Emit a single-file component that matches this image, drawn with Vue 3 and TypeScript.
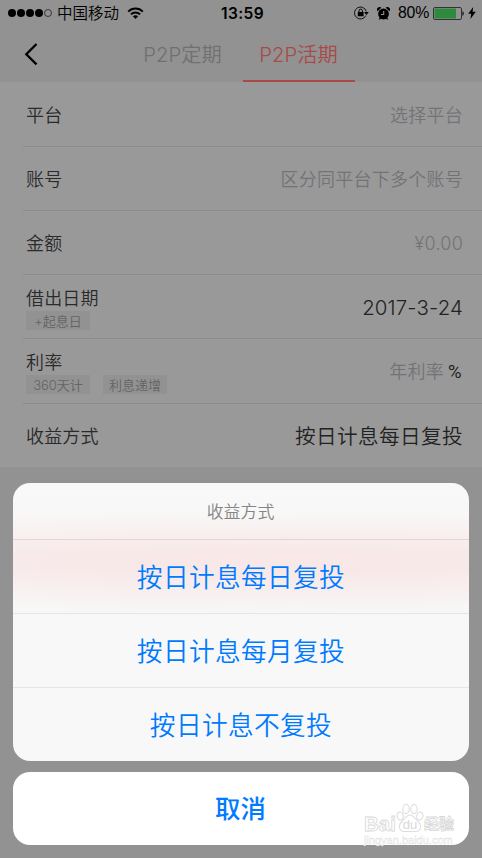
<script setup lang="ts">
interface Row {
  label: string
  value: string
  kind: 'hint' | 'value' | 'method' | 'rate'
  tags?: string[]
}

const rows: Row[] = [
  { label: '平台', value: '选择平台', kind: 'hint' },
  { label: '账号', value: '区分同平台下多个账号', kind: 'hint' },
  { label: '金额', value: '¥0.00', kind: 'hint' },
  { label: '借出日期', value: '2017-3-24', kind: 'value', tags: ['+起息日'] },
  { label: '利率', value: '年利率', kind: 'rate', tags: ['360天计', '利息递增'] },
  { label: '收益方式', value: '按日计息每日复投', kind: 'method' },
]

const options: string[] = ['按日计息每日复投', '按日计息每月复投', '按日计息不复投']
</script>

<template>
  <div class="screen">
    <div class="status">
      <div class="carrier">
        <svg class="dots" width="45" height="10" viewBox="0 0 45 10">
          <circle v-for="i in 4" :key="i" :cx="4 + (i - 1) * 9" cy="5" r="4" />
          <circle cx="40" cy="5" r="3.5" fill="none" stroke="#222" stroke-width="0.8" />
        </svg>
        <span class="carrier-name">中国移动</span>
        <svg class="wifi" width="17" height="13" viewBox="0 0 17 13" fill="none" stroke="#000" stroke-width="2">
          <path d="M1.2 4.6C5.2 .5 11.8 .5 15.8 4.6M3.9 7.4c2.6-2.5 6.6-2.5 9.2 0" />
          <path d="M5.8 9.3c1.6-1.4 3.8-1.4 5.4 0L8.5 12Z" fill="#000" stroke="none" />
        </svg>
      </div>
      <div class="clock">13:59</div>
      <div class="indicators">
        <svg width="15" height="14" viewBox="0 0 15 14">
          <path d="M11.9 9.6A6 6 0 1 1 12.3 5.5" fill="none" stroke="#111" stroke-width="1" />
          <path d="M10 6h4.8l-2.4 3Z" />
          <rect x="3.8" y="6" width="5.8" height="4.2" rx=".5" />
          <path d="M5 6V4.8a1.7 1.7 0 0 1 3.4 0V6" fill="none" stroke="#000" stroke-width="1" />
        </svg>
        <svg class="alarm" width="13" height="13" viewBox="0 0 13 13">
          <circle cx="6.5" cy="7" r="5.4" />
          <path d="M.5 4.2A2.6 2.6 0 0 1 4.3 .7ZM12.5 4.2A2.6 2.6 0 0 0 8.7 .7ZM1.7 12.6l1.5-2.6 1.3.9-1.5 1.7ZM11.3 12.6l-1.5-2.6-1.3.9 1.5 1.7Z" />
          <path d="M6.7 4v3.5H4" fill="none" stroke="#929292" stroke-width="1.1" />
        </svg>
        <span class="percent">80%</span>
        <svg class="battery" width="32" height="13" viewBox="0 0 32 13">
          <rect x=".5" y=".5" width="28" height="12" rx="1.5" fill="none" stroke="#333" stroke-width="1" />
          <rect x="1.5" y="1.5" width="21.5" height="10" fill="#2e8b3d" />
          <path d="M29.5 4.3c1.6.3 1.6 4.1 0 4.4Z" />
        </svg>
        <svg class="bolt" width="8" height="12" viewBox="0 0 8 12"><path d="M5.2 0 .2 6.7h3L2.4 12l5.4-7.3H4.6Z" /></svg>
      </div>
    </div>

    <div class="nav">
      <svg class="back" width="14" height="24" viewBox="0 0 14 24" fill="none" stroke="#000" stroke-width="2.3">
        <path d="M12.5 2 2.3 12.2 12.5 22.4" />
      </svg>
      <div class="tab">P2P定期</div>
      <div class="tab active">P2P活期</div>
    </div>

    <div class="form">
      <div v-for="row in rows" :key="row.label" class="row">
        <div class="left">
          <div class="label">{{ row.label }}</div>
          <div v-if="row.tags" class="tags">
            <span v-for="tag in row.tags" :key="tag" class="tag">{{ tag }}</span>
          </div>
        </div>
        <div class="field" :class="row.kind">
          <span>{{ row.value }}</span>
          <span v-if="row.kind === 'rate'" class="unit">%</span>
        </div>
      </div>
    </div>

    <div class="actions">
      <div class="sheet">
        <div class="title">收益方式</div>
        <div v-for="option in options" :key="option" class="option">{{ option }}</div>
      </div>
      <div class="cancel">取消</div>
    </div>

    <div class="watermark">
      <div class="brand">
        <span>Bai</span>
        <svg width="28" height="31" viewBox="0 0 28 31" fill="#fff" stroke="#dedede" stroke-width="1.1">
          <ellipse cx="4.2" cy="13" rx="3" ry="4" transform="rotate(-15 4.2 13)" />
          <ellipse cx="10" cy="6" rx="3.2" ry="4.6" />
          <ellipse cx="18" cy="6" rx="3.2" ry="4.6" />
          <ellipse cx="23.8" cy="13" rx="3" ry="4" transform="rotate(15 23.8 13)" />
          <path d="M14 12c-3.5 0-5 3.5-8 6.5-5 4.5-2 10 2 10h12c4 0 7-5.5 2-10-3-3-4.5-6.5-8-6.5Z" />
          <text x="14" y="26" text-anchor="middle" class="du">du</text>
        </svg>
        <span class="cn">经验</span>
      </div>
      <div class="site">jingyan.baidu.com</div>
    </div>
  </div>
</template>

<style>
body {
  margin: 0;
  background: #929292;
}
</style>

<style scoped>
.screen {
  position: relative;
  width: 482px;
  height: 858px;
  overflow: hidden;
  background: #929292;
  font-family: Inter, "Noto Sans CJK SC", sans-serif;
  color: #000;
}
.status {
  display: grid;
  grid-template-columns: 1fr auto 1fr;
  align-items: center;
  height: 26px;
  padding: 0 6px 0 8px;
}
.carrier,
.indicators {
  display: flex;
  align-items: center;
}
.carrier-name {
  margin-left: 4px;
  padding-top: 2px;
  font-size: 15.5px;
  line-height: 24px;
  font-weight: 350;
}
.wifi {
  margin-left: 8px;
}
.clock {
  padding-left: 1px;
  font-size: 15.5px;
  font-weight: 600;
  letter-spacing: 0.4px;
}
.indicators {
  justify-content: flex-end;
}
.alarm {
  margin-left: 8px;
}
.percent {
  margin-left: 8px;
  font-family: "Liberation Sans", sans-serif;
  font-size: 15.8px;
  letter-spacing: -0.2px;
}
.battery {
  margin-left: 4px;
}
.bolt {
  margin-left: 3px;
}
.nav {
  display: flex;
  height: 56px;
  padding-left: 24px;
}
.back {
  margin: 16px 89px 0 0;
}
.tab {
  box-sizing: border-box;
  width: 112px;
  margin-right: 4px;
  padding: 14px 1px 0 0;
  border-radius: 3px 3px 0 0;
  text-align: center;
  font-size: 20.3px;
  font-weight: 350;
  line-height: 30px;
  color: #707070;
}
.tab.active {
  color: #a84a4a;
  background: linear-gradient(#a84a4a, #a84a4a) bottom / 100% 2.5px no-repeat;
}
.form {
  padding-top: 0.6px;
  background: #999;
}
.row {
  box-sizing: border-box;
  display: flex;
  justify-content: space-between;
  align-items: center;
  height: 64.2px;
  margin-left: 23px;
  padding: 3px 19px 0 3px;
  border-bottom: 1px solid #8b8b8b;
}
.row:last-child {
  height: 63.4px;
  border-bottom: 0;
}
.label {
  font-size: 18px;
  line-height: 26px;
  font-weight: 350;
  letter-spacing: 0.15px;
  color: #2a2a2a;
}
.tags {
  display: flex;
  gap: 13px;
  margin-top: -1px;
  padding-bottom: 1px;
}
.tag {
  width: 64px;
  height: 19px;
  background: #929292;
  text-align: center;
  font-size: 13px;
  line-height: 20px;
  font-weight: 350;
  color: #646464;
}
.field {
  font-size: 18px;
  font-weight: 350;
  line-height: 28px;
  letter-spacing: 0.25px;
  color: #737377;
}
.field.value,
.field.method {
  font-size: 20.6px;
  color: #222;
}
.field.value {
  font-size: 20.4px;
  letter-spacing: 0.15px;
}
.field.method {
  letter-spacing: 0.4px;
}
.field.rate {
  margin-right: 1.5px;
}
.unit {
  margin-left: 4px;
  font-family: Roboto, sans-serif;
  font-size: 18.5px;
  font-weight: 400;
  letter-spacing: 0;
  color: #222;
}
.actions {
  position: absolute;
  left: 13px;
  right: 13px;
  bottom: 13px;
  display: flex;
  flex-direction: column;
  gap: 11px;
  text-align: center;
  color: #007aff;
}
.sheet {
  border-radius: 17px;
  background:
    radial-gradient(ellipse 200px 55px at 35% 29%, rgba(247, 225, 225, 0.35), transparent),
    radial-gradient(ellipse 200px 55px at 78% 29%, rgba(247, 225, 225, 0.35), transparent),
    linear-gradient(#f9f9f9 0, #f9f8f8 9%, #f8f2f2 18%, #f8ebeb 25%, #f8ebeb 31%, #f8f2f2 39%, #f8f7f7 46%, #f8f8f8 51%);
}
.title {
  box-sizing: border-box;
  height: 56px;
  padding: 1px 1px 0 0;
  font-size: 16.9px;
  line-height: 57px;
  font-weight: 350;
  color: #858585;
}
.option {
  box-sizing: border-box;
  height: 74px;
  border-top: 1px solid #e6e4e5;
  font-size: 25.7px;
  line-height: 75px;
  letter-spacing: 0.35px;
  font-weight: 350;
}
.title + .option {
  border-top-color: #ecd2d4;
}
.cancel {
  box-sizing: border-box;
  height: 73px;
  padding-right: 1px;
  border-radius: 17px;
  background: #fff;
  font-size: 25.4px;
  line-height: 73px;
  font-weight: 500;
}
.watermark {
  position: absolute;
  left: 364px;
  top: 803px;
  width: 92px;
}
.brand {
  display: flex;
  align-items: flex-end;
  height: 31px;
  font-family: "Liberation Sans", "Noto Sans CJK SC", sans-serif;
  font-size: 20.5px;
  line-height: 20px;
  font-weight: 700;
  color: #fff;
  -webkit-text-stroke: 0.8px #d8d8d8;
}
.brand .cn {
  font-size: 15px;
}
.du {
  font-size: 13px;
  font-weight: 500;
  fill: #d8d8d8;
  stroke: none;
  -webkit-text-stroke: 0;
}
.site {
  font-family: "Liberation Sans", sans-serif;
  font-size: 11px;
  line-height: 13px;
  color: #f4f4f4;
  -webkit-text-stroke: 0.3px #dcdcdc;
}
</style>
